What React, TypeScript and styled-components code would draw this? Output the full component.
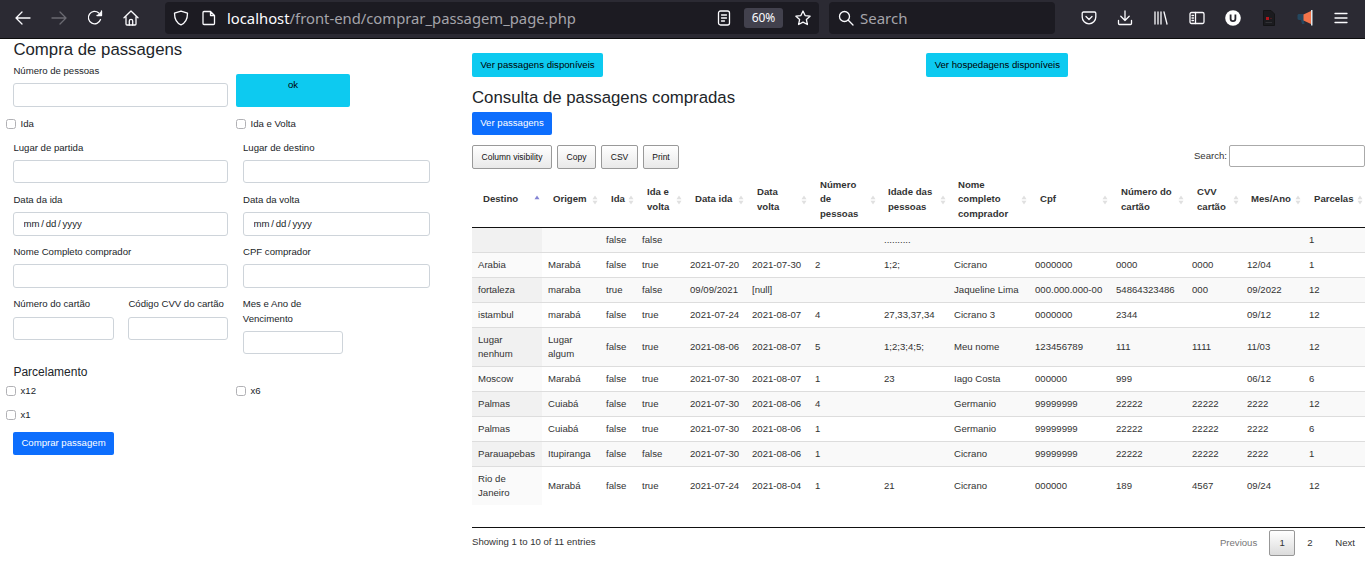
import styled, { createGlobalStyle } from "styled-components";

const GlobalStyle = createGlobalStyle`
   html, body {
      margin: 0;
      padding: 0;
      background: #fff;
      overflow: hidden;
   }
   body {
      font-family: "Liberation Sans", Arial, sans-serif;
      font-size: 9.6px;
      line-height: 14.4px;
      color: #212529;
   }
   * {
      box-sizing: border-box;
   }
`;

const columns = [
   { title: ["Destino"], width: 70, pad: 11 },
   { title: ["Origem"], width: 58, pad: 11 },
   { title: ["Ida"], width: 36, pad: 11 },
   { title: ["Ida e", "volta"], width: 48, pad: 11 },
   { title: ["Data ida"], width: 62, pad: 11 },
   { title: ["Data", "volta"], width: 63, pad: 11 },
   { title: ["Número", "de", "pessoas"], width: 69, pad: 11 },
   { title: ["Idade das", "pessoas"], width: 70, pad: 10 },
   { title: ["Nome", "completo", "comprador"], width: 81, pad: 10 },
   { title: ["Cpf"], width: 81, pad: 11 },
   { title: ["Número do", "cartão"], width: 76, pad: 11 },
   { title: ["CVV", "cartão"], width: 55, pad: 11 },
   { title: ["Mes/Ano"], width: 62, pad: 10 },
   { title: ["Parcelas"], width: 62, pad: 11 },
];

const rows = [
   ["", "", "false", "false", "", "", "", "..........", "", "", "", "", "", "1"],
   ["Arabia", "Marabá", "false", "true", "2021-07-20", "2021-07-30", "2", "1;2;", "Cicrano", "0000000", "0000", "0000", "12/04", "1"],
   ["fortaleza", "maraba", "true", "false", "09/09/2021", "[null]", "", "", "Jaqueline Lima", "000.000.000-00", "54864323486", "000", "09/2022", "12"],
   ["istambul", "marabá", "false", "true", "2021-07-24", "2021-08-07", "4", "27,33,37,34", "Cicrano 3", "0000000", "2344", "", "09/12", "12"],
   ["Lugar nenhum", "Lugar algum", "false", "true", "2021-08-06", "2021-08-07", "5", "1;2;3;4;5;", "Meu nome", "123456789", "111", "1111", "11/03", "12"],
   ["Moscow", "Marabá", "false", "true", "2021-07-30", "2021-08-07", "1", "23", "Iago Costa", "000000", "999", "", "06/12", "6"],
   ["Palmas", "Cuiabá", "false", "true", "2021-07-30", "2021-08-06", "4", "", "Germanio", "99999999", "22222", "22222", "2222", "12"],
   ["Palmas", "Cuiabá", "false", "true", "2021-07-30", "2021-08-06", "1", "", "Germanio", "99999999", "22222", "22222", "2222", "6"],
   ["Parauapebas", "Itupiranga", "false", "false", "2021-07-30", "2021-08-06", "1", "", "Cicrano", "99999999", "22222", "22222", "2222", "1"],
   ["Rio de Janeiro", "Marabá", "false", "true", "2021-07-24", "2021-08-04", "1", "21", "Cicrano", "000000", "189", "4567", "09/24", "12"],
];

function SortMark({ active }: { active?: boolean }) {
   return (
      <SortSvg viewBox="0 0 6 10" width="6" height="10">
         <path d="M3 0.5 L5.5 4.2 L0.5 4.2 Z" fill={active ? "#8484d4" : "#e0e0e0"} />
         {!active && <path d="M3 9.5 L5.5 5.8 L0.5 5.8 Z" fill="#e0e0e0" />}
      </SortSvg>
   );
}

function LineIcon({ children, size = 16 }: { children: React.ReactNode; size?: number }) {
   return (
      <svg
         viewBox="0 0 16 16"
         width={size}
         height={size}
         fill="none"
         stroke="currentColor"
         strokeWidth="1.3"
         strokeLinecap="round"
         strokeLinejoin="round"
      >
         {children}
      </svg>
   );
}

function UblockIcon() {
   return (
      <svg viewBox="0 0 16 16" width="16" height="16">
         <circle cx="8" cy="8" r="7.8" fill="#fff" />
         <path d="M5.6 4.6v4.2a2.4 2.4 0 0 0 4.8 0V4.6" fill="none" stroke="#26252d" strokeWidth="1.8" />
      </svg>
   );
}

function DarkDocIcon() {
   return (
      <svg viewBox="0 0 12 16" width="12" height="16">
         <path d="M0.5 0.5h7.5l3.5 3.5v11.5h-11z" fill="#1b1b1f" stroke="#141416" />
         <rect x="3" y="7" width="3" height="3" fill="#b0151c" />
         <rect x="7" y="8" width="2" height="1" fill="#4a1c20" />
         <rect x="2.5" y="12" width="6.5" height="1" fill="#323236" />
      </svg>
   );
}

function MegaphoneIcon() {
   return (
      <svg viewBox="0 0 16 16" width="16" height="16">
         <path d="M0.5 5.5c0-1 .8-1.5 1.5-1.5h6v6H2c-1 0-1.5-.8-1.5-1.5z" fill="#24475f" />
         <path d="M4 10h3l.5 4H5z" fill="#24475f" />
         <path d="M6.5 4.5L14 1v13L6.5 10.5z" fill="#f4744a" />
         <rect x="14" y="0" width="1.5" height="15.5" fill="#dfe6ea" />
      </svg>
   );
}

function App() {
   return (
      <>
         <GlobalStyle />
         <Toolbar>
            <NavIcon>
               <LineIcon><path d="M15 8H1.5M7 2L1 8l6 6" /></LineIcon>
            </NavIcon>
            <NavIcon $dim>
               <LineIcon><path d="M1 8h13.5M9 2l6 6-6 6" /></LineIcon>
            </NavIcon>
            <NavIcon>
               <LineIcon>
                  <path d="M13.5 9.5A6.2 6.2 0 1 1 11.8 3" />
                  <path d="M14.5 1v4.5H10" fill="currentColor" />
               </LineIcon>
            </NavIcon>
            <NavIcon>
               <LineIcon>
                  <path d="M1 7.8L8 1l7 6.8M3 6.5V14c0 .6.4 1 1 1h8c.6 0 1-.4 1-1V6.5" />
                  <path d="M6.3 15v-4a1.7 1.7 0 0 1 3.4 0v4" />
               </LineIcon>
            </NavIcon>
            <UrlBar>
               <UrlIcon>
                  <LineIcon><path d="M8 1.2l6.5 2c0 6-1.5 9.5-6.5 11.6C3 12.7 1.5 9.2 1.5 3.2z" /></LineIcon>
               </UrlIcon>
               <UrlIcon $left={12}>
                  <LineIcon><path d="M3 1.5h6.5l4 4v8c0 .6-.4 1-1 1H3c-.6 0-1-.4-1-1v-11c0-.6.4-1 1-1zM9.5 1.5v4h4" /></LineIcon>
               </UrlIcon>
               <UrlText>
                  <strong>localhost</strong>/front-end/comprar_passagem_page.php
               </UrlText>
               <UrlIcon>
                  <LineIcon>
                     <rect x="2.5" y="1" width="11" height="14" rx="2" />
                     <path d="M5.5 5h5M5.5 8h5M5.5 11h3" />
                  </LineIcon>
               </UrlIcon>
               <ZoomBadge>60%</ZoomBadge>
               <UrlIcon $left={12}>
                  <LineIcon><path d="M8 1l2.1 4.6 5 .6-3.7 3.4 1 4.9L8 12.100l-4.400 2.400 1-4.900L.9 6.200l5-.6z" /></LineIcon>
               </UrlIcon>
            </UrlBar>
            <SearchBar>
               <LineIcon>
                  <circle cx="6.5" cy="6.5" r="5" />
                  <path d="M10.3 10.3L15 15" />
               </LineIcon>
               <span>Search</span>
            </SearchBar>
            <ToolIcons>
               <ToolSlot>
                  <LineIcon>
                     <path d="M2.5 2h11c.8 0 1.3.5 1.3 1.3V7A6.8 6.8 0 0 1 1.200 7V3.300C1.200 2.500 1.700 2 2.500 2z" />
                     <path d="M5 6.5l3 3 3-3" />
                  </LineIcon>
               </ToolSlot>
               <ToolSlot>
                  <LineIcon>
                     <path d="M8 1v9.500M3.800 6.300L8 10.500l4.200-4.200M1.500 10.500v3c0 .6.4 1 1 1h11c.6 0 1-.4 1-1v-3" />
                  </LineIcon>
               </ToolSlot>
               <ToolSlot>
                  <LineIcon>
                     <path d="M2 2v12M5 2v12M8 2v12M11 2l3 12" />
                  </LineIcon>
               </ToolSlot>
               <ToolSlot>
                  <LineIcon>
                     <rect x="1" y="2.5" width="14" height="11" rx="1.5" />
                     <path d="M6.5 2.5v11M3 5.5h1.500M3 8h1.500M3 10.500h1.500" />
                  </LineIcon>
               </ToolSlot>
               <ToolSlot><UblockIcon /></ToolSlot>
               <ToolSlot><DarkDocIcon /></ToolSlot>
               <ToolSlot><MegaphoneIcon /></ToolSlot>
               <ToolSlot>
                  <LineIcon><path d="M2 3.500h12M2 8h12M2 12.500h12" /></LineIcon>
               </ToolSlot>
            </ToolIcons>
         </Toolbar>
         <Page>
            <FormPanel>
               <Heading>Compra de passagens</Heading>
               <PeopleRow>
                  <Field $width={215}>
                     <FieldLabel>Número de pessoas</FieldLabel>
                     <TextInput />
                  </Field>
                  <OkButton>ok</OkButton>
               </PeopleRow>
               <CheckRow $top={10}>
                  <Check $width={230}><CheckBox type="checkbox" />Ida</Check>
                  <Check><CheckBox type="checkbox" />Ida e Volta</Check>
               </CheckRow>
               <FieldRow>
                  <Field $width={215}>
                     <FieldLabel>Lugar de partida</FieldLabel>
                     <TextInput />
                  </Field>
                  <Field $width={187}>
                     <FieldLabel>Lugar de destino</FieldLabel>
                     <TextInput />
                  </Field>
               </FieldRow>
               <FieldRow>
                  <Field $width={215}>
                     <FieldLabel>Data da ida</FieldLabel>
                     <DateInput defaultValue="mm / dd / yyyy" />
                  </Field>
                  <Field $width={187}>
                     <FieldLabel>Data da volta</FieldLabel>
                     <DateInput defaultValue="mm / dd / yyyy" />
                  </Field>
               </FieldRow>
               <FieldRow>
                  <Field $width={215}>
                     <FieldLabel>Nome Completo comprador</FieldLabel>
                     <TextInput />
                  </Field>
                  <Field $width={187}>
                     <FieldLabel>CPF comprador</FieldLabel>
                     <TextInput />
                  </Field>
               </FieldRow>
               <CardRow>
                  <Field $width={101}>
                     <FieldLabel>Número do cartão</FieldLabel>
                     <TextInput />
                  </Field>
                  <Field $width={100}>
                     <FieldLabel>Código CVV do cartão</FieldLabel>
                     <TextInput />
                  </Field>
                  <Field $width={100}>
                     <FieldLabel>Mes e Ano de Vencimento</FieldLabel>
                     <TextInput />
                  </Field>
               </CardRow>
               <SubHeading>Parcelamento</SubHeading>
               <CheckRow $top={4.65}>
                  <Check $width={230}><CheckBox type="checkbox" />x12</Check>
                  <Check><CheckBox type="checkbox" />x6</Check>
               </CheckRow>
               <CheckRow>
                  <Check><CheckBox type="checkbox" />x1</Check>
               </CheckRow>
               <BlueButton $width={101}>Comprar passagem</BlueButton>
            </FormPanel>
            <TablePanel>
               <TopButtons>
                  <CyanButton>Ver passagens disponíveis</CyanButton>
                  <CyanButton>Ver hospedagens disponíveis</CyanButton>
               </TopButtons>
               <PanelHeading>Consulta de passagens compradas</PanelHeading>
               <BlueButton $width={80}>Ver passagens</BlueButton>
               <TableTools>
                  <ToolButtons>
                     <GrayButton $width={80}>Column visibility</GrayButton>
                     <GrayButton $width={39}>Copy</GrayButton>
                     <GrayButton $width={37}>CSV</GrayButton>
                     <GrayButton $width={36}>Print</GrayButton>
                  </ToolButtons>
                  <SearchBox>
                     Search:
                     <SearchInput />
                  </SearchBox>
               </TableTools>
               <TableScroll>
                  <DataTable>
                     <colgroup>
                        {columns.map((col) => (
                           <Col key={col.title.join(" ")} $width={col.width} />
                        ))}
                     </colgroup>
                     <thead>
                        <tr>
                           {columns.map((col, index) => (
                              <HeadCell key={col.title.join(" ")} $pad={col.pad}>
                                 {col.title.map((line) => (
                                    <HeadLine key={line}>{line}</HeadLine>
                                 ))}
                                 <SortMark active={index === 0} />
                              </HeadCell>
                           ))}
                        </tr>
                     </thead>
                     <tbody>
                        {rows.map((row, rowIndex) => (
                           <BodyRow key={rowIndex} $odd={rowIndex % 2 === 0}>
                              {row.map((cell, cellIndex) => (
                                 <BodyCell key={cellIndex}>{cell}</BodyCell>
                              ))}
                           </BodyRow>
                        ))}
                     </tbody>
                  </DataTable>
               </TableScroll>
               <TableFooter>
                  <span>Showing 1 to 10 of 11 entries</span>
                  <Pagination>
                     <PageLink $muted>Previous</PageLink>
                     <PageCurrent>1</PageCurrent>
                     <PageLink $left={12}>2</PageLink>
                     <PageLink $left={22.7}>Next</PageLink>
                  </Pagination>
               </TableFooter>
            </TablePanel>
         </Page>
      </>
   );
}

export default App;

const Toolbar = styled.header`
   height: 39px;
   background: #2b2a33;
   border-bottom: 1px solid #0c0c0d;
   display: flex;
   align-items: center;
   padding-bottom: 2px;
   color: #fbfbfe;
   font-family: "Noto Sans", sans-serif;
`;

const NavIcon = styled.div<{ $dim?: boolean }>`
   width: 36px;
   display: flex;
   justify-content: center;
   color: ${(p) => (p.$dim ? "#6b6a72" : "#fbfbfe")};

   &:first-child {
      margin-left: 5px;
   }
`;

const UrlBar = styled.div`
   width: 654px;
   height: 32px;
   margin-left: 16px;
   padding: 0 8px;
   background: #1c1b22;
   border-radius: 4px;
   display: flex;
   align-items: center;
`;

const UrlIcon = styled.div<{ $left?: number }>`
   display: flex;
   flex: none;
   margin-left: ${(p) => p.$left ?? 0}px;
`;

const UrlText = styled.div`
   flex: 1;
   margin-left: 10px;
   font-size: 14.8px;
   line-height: 20px;
   color: #a5a4aa;
   white-space: nowrap;

   strong {
      font-weight: 400;
      color: #fbfbfe;
   }
`;

const ZoomBadge = styled.div`
   width: 39px;
   height: 20px;
   margin-left: 12px;
   background: #42414d;
   border-radius: 3px;
   font-size: 12px;
   line-height: 20px;
   text-align: center;
`;

const SearchBar = styled.div`
   width: 226px;
   height: 32px;
   margin-left: 10px;
   padding-left: 9px;
   background: #1c1b22;
   border-radius: 4px;
   display: flex;
   align-items: center;
   gap: 6px;
   font-size: 15px;
   color: #a5a4aa;

   svg {
      color: #fbfbfe;
   }
`;

const ToolIcons = styled.div`
   display: flex;
   align-items: center;
   margin-left: 16px;
`;

const ToolSlot = styled.div`
   width: 36px;
   display: flex;
   justify-content: center;
`;

const Page = styled.main`
   display: flex;
   align-items: flex-start;
   height: 524px;
   overflow: hidden;
`;

const FormPanel = styled.section`
   width: 472px;
   flex: none;
   padding: 1px 0 0 13px;
`;

const TablePanel = styled.section`
   flex: 1;
   min-width: 0;
   padding-top: 14px;
`;

const Heading = styled.h3`
   margin: 0;
   padding-left: 0.4px;
   font-size: 16.8px;
   line-height: 20px;
   font-weight: 500;
`;

const PanelHeading = styled(Heading)`
   margin-bottom: 4px;
   padding-left: 0;
`;

const SubHeading = styled.h5`
   margin: 10.5px 0 0;
   padding-left: 0.4px;
   font-size: 12px;
   line-height: 14.4px;
   font-weight: 500;
`;

const FieldLabel = styled.label`
   display: block;
   margin-bottom: 5px;
   color: #212529;
`;

const Field = styled.div<{ $width: number }>`
   width: ${(p) => p.$width}px;
   flex: none;

   &:first-child ${FieldLabel} {
      padding-left: 0.4px;
   }
`;

const TextInput = styled.input`
   display: block;
   width: 100%;
   height: 23.3px;
   padding: 0 9.5px;
   border: 1px solid #ced4da;
   border-radius: 3px;
   background: #fff;
   font: 9.6px "Liberation Sans", Arial, sans-serif;
   color: #212529;
   outline: none;
`;

const DateInput = styled(TextInput)`
   word-spacing: -0.9px;
`;

const PeopleRow = styled.div`
   display: flex;
   align-items: flex-end;
   gap: 8px;
   margin-top: 4px;
`;

const OkButton = styled.div`
   width: 114px;
   height: 33px;
   padding-top: 4px;
   background: #0dcaf0;
   border-radius: 2px;
   text-align: center;
   color: #000;
`;

const FieldRow = styled.div`
   display: flex;
   gap: 15px;
   margin-bottom: 9.45px;
`;

const CardRow = styled.div`
   display: flex;
   gap: 14.4px;
`;

const CheckRow = styled.div<{ $top?: number }>`
   display: flex;
   height: 14.4px;
   margin: ${(p) => p.$top ?? 0}px 0 9.6px -7px;
`;

const Check = styled.label<{ $width?: number }>`
   display: flex;
   align-items: center;
   width: ${(p) => (p.$width ? `${p.$width}px` : "auto")};
`;

const CheckBox = styled.input`
   appearance: none;
   width: 10px;
   height: 10px;
   margin: 0 4.5px 0 0;
   border: 1px solid #b1b1b5;
   border-radius: 2.5px;
   background: #fff;
`;

const BlueButton = styled.div<{ $width: number }>`
   width: ${(p) => p.$width}px;
   height: 23px;
   background: #0d6efd;
   border-radius: 2px;
   color: #fff;
   text-align: center;
   line-height: 22px;
`;

const TopButtons = styled.div`
   display: flex;
   gap: 323px;
   margin-bottom: 11px;
`;

const CyanButton = styled.div`
   height: 24px;
   padding: 0 8.5px;
   background: #0dcaf0;
   border-radius: 2px;
   color: #000;
   line-height: 23px;
`;

const TableTools = styled.div`
   display: flex;
   justify-content: space-between;
   align-items: flex-start;
   height: 27px;
   margin-top: 10px;
`;

const ToolButtons = styled.div`
   display: flex;
   gap: 5px;
`;

const GrayButton = styled.div<{ $width: number }>`
   width: ${(p) => p.$width}px;
   height: 24px;
   border: 1px solid #999;
   border-radius: 2px;
   background: linear-gradient(to bottom, #fff 0%, #e9e9e9 100%);
   color: #111;
   font-size: 8.5px;
   text-align: center;
   line-height: 22px;
`;

const SearchBox = styled.label`
   display: flex;
   align-items: flex-start;
   gap: 2px;
   color: #333;
   line-height: 22px;
`;

const SearchInput = styled.input`
   width: 136px;
   height: 22px;
   border: 1px solid #aaa;
   border-radius: 2px;
   background: #fff;
   outline: none;
`;

const TableScroll = styled.div`
   height: 356px;
   border-bottom: 1px solid #111;
`;

const DataTable = styled.table`
   width: 893px;
   table-layout: fixed;
   border-collapse: separate;
   border-spacing: 0;
`;

const Col = styled.col<{ $width: number }>`
   width: ${(p) => p.$width}px;
`;

const HeadCell = styled.th<{ $pad: number }>`
   position: relative;
   height: 56px;
   padding: 0 10px 0 ${(p) => p.$pad}px;
   border-bottom: 1px solid #111;
   text-align: left;
   font-size: 9.6px;
   font-weight: 700;
   color: #333;
`;

const HeadLine = styled.span`
   display: block;
   white-space: nowrap;
`;

const SortSvg = styled.svg`
   position: absolute;
   right: 2px;
   top: 50%;
   margin-top: -5px;
`;

const BodyRow = styled.tr<{ $odd: boolean }>`
   background: ${(p) => (p.$odd ? "#f9f9f9" : "#fff")};

   td:first-child {
      background: ${(p) => (p.$odd ? "#f1f1f1" : "#fafafa")};
   }
`;

const BodyCell = styled.td`
   padding: 5px 6px;
   border-top: 1px solid #ddd;
   vertical-align: middle;
   color: #333;
   font-size: 9.6px;
   line-height: 14px;
   overflow: hidden;

   tr:first-child & {
      border-top: none;
   }
`;

const TableFooter = styled.div`
   display: flex;
   justify-content: space-between;
   align-items: flex-start;
   padding-top: 2px;
   color: #333;
   line-height: 24px;
`;

const Pagination = styled.div`
   display: flex;
   align-items: center;
   height: 26px;
   padding-right: 10px;
`;

const PageLink = styled.span<{ $muted?: boolean; $left?: number }>`
   margin-left: ${(p) => p.$left ?? 0}px;
   color: ${(p) => (p.$muted ? "#777" : "#333")};
`;

const PageCurrent = styled.span`
   width: 26px;
   height: 26px;
   margin-left: 12px;
   border: 1px solid #979797;
   border-radius: 2px;
   background: linear-gradient(to bottom, #fff 0%, #dcdcdc 100%);
   text-align: center;
   line-height: 24px;
   color: #333;
`;
